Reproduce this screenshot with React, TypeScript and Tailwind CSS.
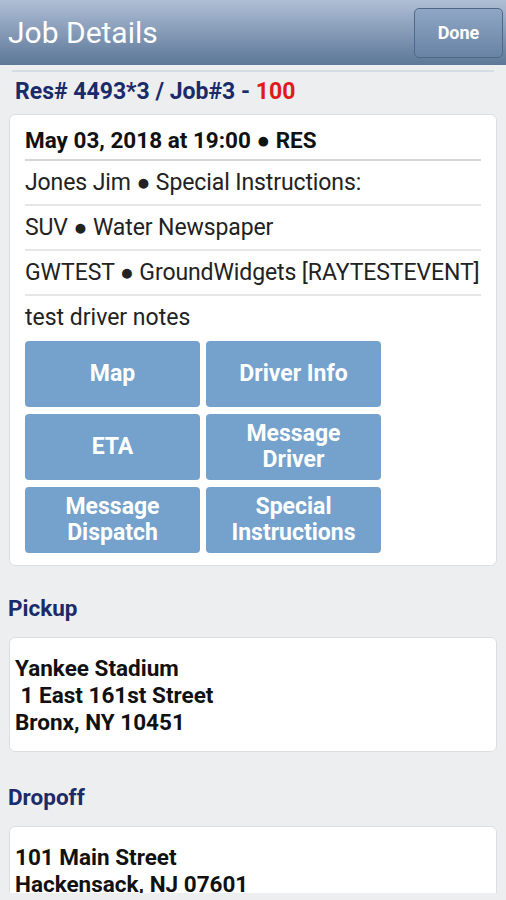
const buttons = [
  ['Map'],
  ['Driver Info'],
  ['ETA'],
  ['Message', 'Driver'],
  ['Message', 'Dispatch'],
  ['Special', 'Instructions'],
]

const details = [
  'Jones Jim ● Special Instructions:',
  'SUV ● Water Newspaper',
  'GWTEST ● GroundWidgets [RAYTESTEVENT]',
]

function AddressCard({ lines }: { lines: string[] }) {
  return (
    <div className="mx-[9px] rounded-md border border-[#dcdfe2] bg-white px-[5px] pt-[17px] pb-[15px] text-[22.5px] leading-[27px] font-bold text-[#111] whitespace-pre">
      {lines.map((l) => (
        <div key={l}>{l}</div>
      ))}
    </div>
  )
}

export default function App() {
  return (
    <div className="h-[900px] w-[506px] overflow-hidden bg-[#eceef0] font-['Roboto',sans-serif]">
      <header className="flex h-[65px] items-center justify-between bg-gradient-to-b from-[#b0bfd6] to-[#5c7798] pl-2 pr-[3px]">
        <h1 className="text-[30px] text-white">Job Details</h1>
        <button className="h-[50px] w-[89px] rounded-[5px] border border-[#4f6888] bg-gradient-to-b from-[#8fa7c4] to-[#6983a5] text-[18px] font-bold text-white">
          Done
        </button>
      </header>

      <div className="h-[828px] overflow-hidden">
        <div className="mx-3 mt-[5px] h-[2px] bg-[#d3dde2]" />
        <div className="mt-[8px] pl-[15px] text-[23px] font-bold leading-[24px] text-[#1b2a68]">
          Res# 4493*3 / Job#3 - <span className="text-[#e01a1a]">100</span>
        </div>

        <div className="mx-[9px] mt-[10px] rounded-md border border-[#dcdfe2] bg-white px-[15px] pb-[12px]">
          <div className="border-b-2 border-[#d6d6d6] pt-[14px] pb-[8px] text-[22.5px] font-bold leading-[22px] text-[#111]">
            May 03, 2018 at 19:00 ● RES
          </div>
          {details.map((d) => (
            <div
              key={d}
              className="border-b-2 border-[#e6e6e6] pt-[10px] pb-[10px] text-[23px] leading-[23px] tracking-[-0.1px] text-[#222]"
            >
              {d}
            </div>
          ))}
          <div className="pt-[10px] pb-[12px] text-[23px] leading-[23px] text-[#222]">test driver notes</div>
          <div className="grid w-[356px] grid-cols-2 gap-[6px] gap-y-[7px]">
            {buttons.map((b) => (
              <button
                key={b.join(' ')}
                className="flex h-[66px] flex-col items-center justify-center rounded-[4px] bg-[#74a2cd] text-[23px] font-bold leading-[26px] text-white"
              >
                {b.map((t) => (
                  <span key={t}>{t}</span>
                ))}
              </button>
            ))}
          </div>
        </div>

        <div className="mt-[29px] mb-[16px] pl-[8px] text-[22.5px] font-bold leading-[26px] text-[#1b2a68]">Pickup</div>
        <AddressCard lines={['Yankee Stadium', ' 1 East 161st Street', 'Bronx, NY 10451']} />

        <div className="mt-[32px] mb-[16px] pl-[8px] text-[22.5px] font-bold leading-[26px] text-[#1b2a68]">Dropoff</div>
        <AddressCard lines={['101 Main Street', 'Hackensack, NJ 07601']} />
      </div>
    </div>
  )
}
